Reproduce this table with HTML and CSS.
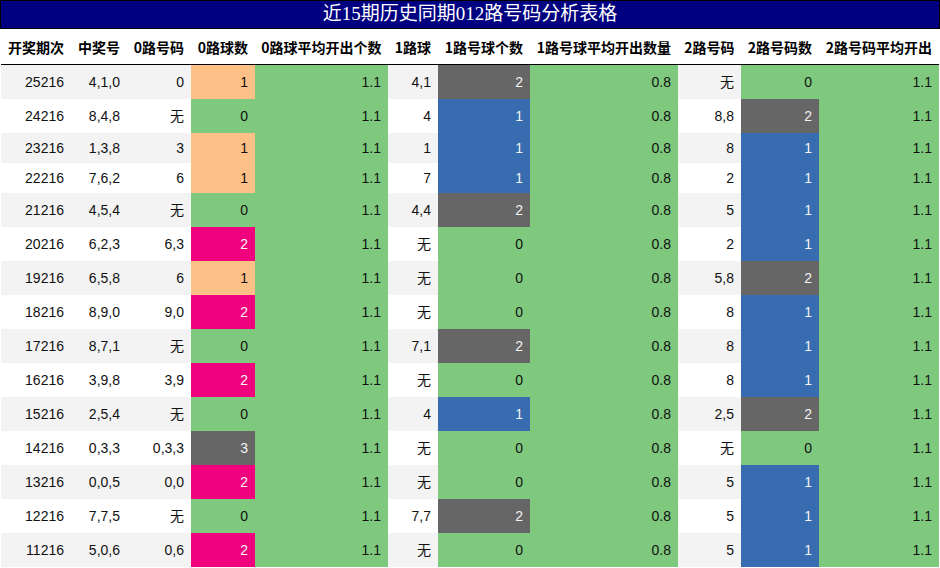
FILE: index.html
```html
<!DOCTYPE html>
<html lang="zh">
<head>
<meta charset="utf-8">
<title>近15期历史同期012路号码分析表格</title>
<link rel="stylesheet" href="styles.css">
</head>
<body>
<div class="title">近15期历史同期012路号码分析表格</div>
<table class="grid">
<colgroup>
<col class="c1"><col class="c2"><col class="c3"><col class="c4"><col class="c5"><col class="c6"><col class="c7"><col class="c8"><col class="c9"><col class="c10"><col class="c11">
</colgroup>
<thead>
<tr><th>开奖期次</th><th>中奖号</th><th>0路号码</th><th>0路球数</th><th>0路球平均开出个数</th><th>1路球</th><th>1路号球个数</th><th>1路号球平均开出数量</th><th>2路号码</th><th>2路号码数</th><th>2路号码平均开出</th></tr>
</thead>
<tbody>
<tr class="odd"><td>25216</td><td>4,1,0</td><td>0</td><td class="or">1</td><td class="gr">1.1</td><td>4,1</td><td class="gy">2</td><td class="gr">0.8</td><td>无</td><td class="gr">0</td><td class="gr">1.1</td></tr>
<tr class="even"><td>24216</td><td>8,4,8</td><td>无</td><td class="gr">0</td><td class="gr">1.1</td><td>4</td><td class="bl">1</td><td class="gr">0.8</td><td>8,8</td><td class="gy">2</td><td class="gr">1.1</td></tr>
<tr class="odd short"><td>23216</td><td>1,3,8</td><td>3</td><td class="or">1</td><td class="gr">1.1</td><td>1</td><td class="bl">1</td><td class="gr">0.8</td><td>8</td><td class="bl">1</td><td class="gr">1.1</td></tr>
<tr class="even short"><td>22216</td><td>7,6,2</td><td>6</td><td class="or">1</td><td class="gr">1.1</td><td>7</td><td class="bl">1</td><td class="gr">0.8</td><td>2</td><td class="bl">1</td><td class="gr">1.1</td></tr>
<tr class="odd"><td>21216</td><td>4,5,4</td><td>无</td><td class="gr">0</td><td class="gr">1.1</td><td>4,4</td><td class="gy">2</td><td class="gr">0.8</td><td>5</td><td class="bl">1</td><td class="gr">1.1</td></tr>
<tr class="even"><td>20216</td><td>6,2,3</td><td>6,3</td><td class="pk">2</td><td class="gr">1.1</td><td>无</td><td class="gr">0</td><td class="gr">0.8</td><td>2</td><td class="bl">1</td><td class="gr">1.1</td></tr>
<tr class="odd"><td>19216</td><td>6,5,8</td><td>6</td><td class="or">1</td><td class="gr">1.1</td><td>无</td><td class="gr">0</td><td class="gr">0.8</td><td>5,8</td><td class="gy">2</td><td class="gr">1.1</td></tr>
<tr class="even"><td>18216</td><td>8,9,0</td><td>9,0</td><td class="pk">2</td><td class="gr">1.1</td><td>无</td><td class="gr">0</td><td class="gr">0.8</td><td>8</td><td class="bl">1</td><td class="gr">1.1</td></tr>
<tr class="odd"><td>17216</td><td>8,7,1</td><td>无</td><td class="gr">0</td><td class="gr">1.1</td><td>7,1</td><td class="gy">2</td><td class="gr">0.8</td><td>8</td><td class="bl">1</td><td class="gr">1.1</td></tr>
<tr class="even"><td>16216</td><td>3,9,8</td><td>3,9</td><td class="pk">2</td><td class="gr">1.1</td><td>无</td><td class="gr">0</td><td class="gr">0.8</td><td>8</td><td class="bl">1</td><td class="gr">1.1</td></tr>
<tr class="odd"><td>15216</td><td>2,5,4</td><td>无</td><td class="gr">0</td><td class="gr">1.1</td><td>4</td><td class="bl">1</td><td class="gr">0.8</td><td>2,5</td><td class="gy">2</td><td class="gr">1.1</td></tr>
<tr class="even"><td>14216</td><td>0,3,3</td><td>0,3,3</td><td class="gy">3</td><td class="gr">1.1</td><td>无</td><td class="gr">0</td><td class="gr">0.8</td><td>无</td><td class="gr">0</td><td class="gr">1.1</td></tr>
<tr class="odd"><td>13216</td><td>0,0,5</td><td>0,0</td><td class="pk">2</td><td class="gr">1.1</td><td>无</td><td class="gr">0</td><td class="gr">0.8</td><td>5</td><td class="bl">1</td><td class="gr">1.1</td></tr>
<tr class="even"><td>12216</td><td>7,7,5</td><td>无</td><td class="gr">0</td><td class="gr">1.1</td><td>7,7</td><td class="gy">2</td><td class="gr">0.8</td><td>5</td><td class="bl">1</td><td class="gr">1.1</td></tr>
<tr class="odd"><td>11216</td><td>5,0,6</td><td>0,6</td><td class="pk">2</td><td class="gr">1.1</td><td>无</td><td class="gr">0</td><td class="gr">0.8</td><td>5</td><td class="bl">1</td><td class="gr">1.1</td></tr>
</tbody>
</table>
</body>
</html>
```
FILE: styles.css
```css
html, body {
  margin: 0;
  padding: 0;
  background: #ffffff;
}
body {
  width: 940px;
  font-family: "Liberation Sans", "Noto Sans CJK SC", sans-serif;
  color: #111111;
}
.title {
  box-sizing: border-box;
  width: 940px;
  height: 29px;
  border: 1px solid #000000;
  background: #000080;
  color: #ffffff;
  font-family: "Liberation Serif", "Noto Sans CJK SC", serif;
  font-size: 19px;
  line-height: 26px;
  text-align: center;
}
.grid {
  table-layout: fixed;
  border-collapse: separate;
  border-spacing: 0;
  margin-left: 1px;
  width: 938px;
  font-size: 14px;
}
.c1 { width: 70px; }
.c2 { width: 56px; }
.c3 { width: 64px; }
.c4 { width: 64px; }
.c5 { width: 133px; }
.c6 { width: 50px; }
.c7 { width: 92px; }
.c8 { width: 148px; }
.c9 { width: 63px; }
.c10 { width: 78px; }
.c11 { width: 120px; }
.grid th {
  height: 35px;
  padding: 0;
  border-bottom: 1px solid #000000;
  font-family: "Noto Sans CJK SC", "Liberation Sans", sans-serif;
  font-weight: bold;
  font-size: 14px;
  color: #000000;
  text-align: center;
  white-space: nowrap;
  vertical-align: middle;
}
.grid td {
  height: 34px;
  padding: 0 7px 0 0;
  text-align: right;
  vertical-align: middle;
  white-space: nowrap;
  line-height: 16px;
}
.grid tr.short td {
  height: 30px;
}
.odd td { background: #f3f3f3; }
.even td { background: #ffffff; }
.grid td.gr { background: #7fc97f; color: #111111; }
.grid td.or { background: #fdc086; color: #111111; }
.grid td.pk { background: #f0027f; color: #f3f3f3; }
.grid td.gy { background: #666666; color: #f3f3f3; }
.grid td.bl { background: #386cb0; color: #f3f3f3; }
```
